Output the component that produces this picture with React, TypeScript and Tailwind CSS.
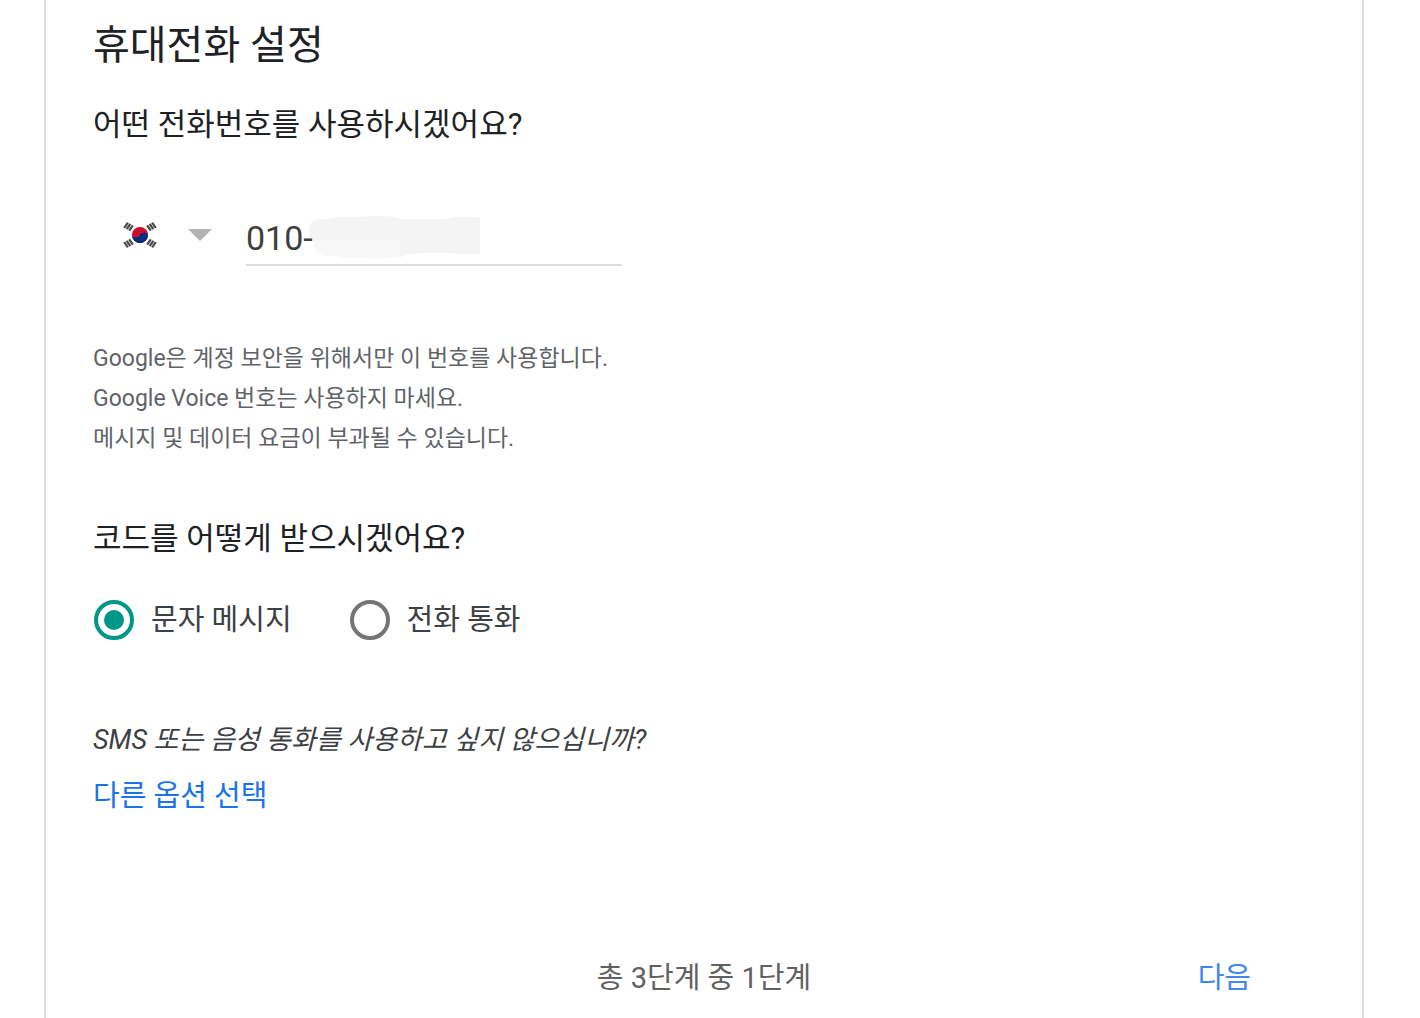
import { useState } from "react";

type CodeMethod = "sms" | "call";

const methods: { value: CodeMethod; label: string }[] = [
  { value: "sms", label: "문자 메시지" },
  { value: "call", label: "전화 통화" },
];

const notices = [
  "Google은 계정 보안을 위해서만 이 번호를 사용합니다.",
  "Google Voice 번호는 사용하지 마세요.",
  "메시지 및 데이터 요금이 부과될 수 있습니다.",
];

function KoreaFlag() {
  return (
    <svg viewBox="0 0 36 28" className="h-7 w-9" aria-hidden="true">
      <circle cx="18" cy="14" r="8" fill="#cd0f2d" />
      <path d="M10 14a4 2.200 0 0 0 8 0a4 2.200 0 0 1 8 0a8 8 0 0 1-16 0z" fill="#003080" />
      <g stroke="#4a4a4a" strokeWidth="2.2">
        <path d="M2.200 7l3.600-5.400M4.700 8.200l3.600-5.400M7.200 9.700l3.600-5.400" />
        <path d="M33.800 7l-3.600-5.400M31.300 8.200l-3.600-5.400M28.800 9.700l-3.600-5.400" />
        <path d="M2.200 21l3.600 5.400M4.700 19.800l3.600 5.400M7.200 18.300l3.600 5.400" />
        <path d="M33.800 21l-3.600 5.400M31.300 19.800l-3.600 5.400M28.800 18.300l-3.600 5.400" />
      </g>
    </svg>
  );
}

function NumberMask() {
  return (
    <svg
      viewBox="0 0 171 44"
      className="pointer-events-none absolute top-2 left-[63px] h-11 w-[171px]"
      aria-hidden="true"
    >
      <path
        d="M11 3H20Q24 1 30 1H54Q70-1 86 1L92 3H137Q142 1 148 1H168Q171 1 171 4V36Q171 38 168 38H148L142 37H112Q98 38 92 41H86Q70 43 54 42H38Q30 41 28 40H18Q6 39 4 25Q0 23 0 15Q0 4 11 3z"
        fill="#f4f4f4"
      />
      <path d="M4 24H91V41H86Q70 43 54 42H38Q30 41 28 40H18Q6 39 4 24z" fill="#f8f8f8" />
    </svg>
  );
}

export default function App() {
  const [phone, setPhone] = useState("010-");
  const [method, setMethod] = useState<CodeMethod>("sms");

  return (
    <div className="min-h-screen bg-white pr-14 pl-11 font-['Roboto','Noto_Sans_CJK_KR',sans-serif] text-[#202124]">
      <main className="flex min-h-screen flex-col border-x-2 border-[#dadce0] px-[47px]">
        <h1 className="mt-[18px] text-[40px] leading-[56px]">휴대전화 설정</h1>

        <h2 className="mt-[31px] text-[31px] leading-10">어떤 전화번호를 사용하시겠어요?</h2>

        <div className="mt-[63px] flex h-[58px] items-center">
          <button
            type="button"
            aria-label="국가 선택"
            className="ml-[29px] flex items-center gap-[30px] pb-1"
          >
            <KoreaFlag />
            <svg viewBox="0 0 24 12" className="h-3 w-6" aria-hidden="true">
              <path d="M0 0h24L12 12z" fill="#b3b3b3" />
            </svg>
          </button>
          <div className="relative ml-[34px] w-[376px]">
            <NumberMask />
            <input
              type="tel"
              aria-label="전화번호"
              value={phone}
              onChange={(e) => setPhone(e.target.value)}
              className="relative h-[58px] w-full border-b-2 border-[#dadce0] bg-transparent pt-1 text-[34px] text-[#3c4043] outline-none"
            />
          </div>
        </div>

        <div className="mt-[73px] text-[23px] leading-10 text-[#5f6368]">
          {notices.map((notice) => (
            <p key={notice}>{notice}</p>
          ))}
        </div>

        <fieldset className="mt-[60px]">
          <legend className="text-[31px] leading-10">코드를 어떻게 받으시겠어요?</legend>
          <div className="mt-[41px] ml-px flex gap-[58px]">
            {methods.map(({ value, label }) => (
              <label
                key={value}
                className="flex items-center gap-[17px] text-[29px] leading-10 text-[#3c4043]"
              >
                <input
                  type="radio"
                  name="method"
                  value={value}
                  checked={method === value}
                  onChange={() => setMethod(value)}
                  className="size-10 appearance-none rounded-full border-4 border-[#757575] bg-clip-content p-1.5 checked:border-[#009688] checked:bg-[#009688]"
                />
                {label}
              </label>
            ))}
          </div>
        </fieldset>

        <p className="mt-20 text-[27px] leading-10 text-[#3c4043] italic">
          SMS 또는 음성 통화를 사용하고 싶지 않으십니까?
        </p>
        <a href="#options" className="mt-4 self-start text-[29px] leading-10 text-[#1a73e8]">
          다른 옵션 선택
        </a>

        <footer className="mt-[142px] grid grid-cols-3 text-[29px] leading-10">
          <span className="col-start-2 text-center text-[#616161]">총 3단계 중 1단계</span>
          <button type="button" className="mr-16 justify-self-end text-[#4285f4]">
            다음
          </button>
        </footer>
      </main>
    </div>
  );
}
